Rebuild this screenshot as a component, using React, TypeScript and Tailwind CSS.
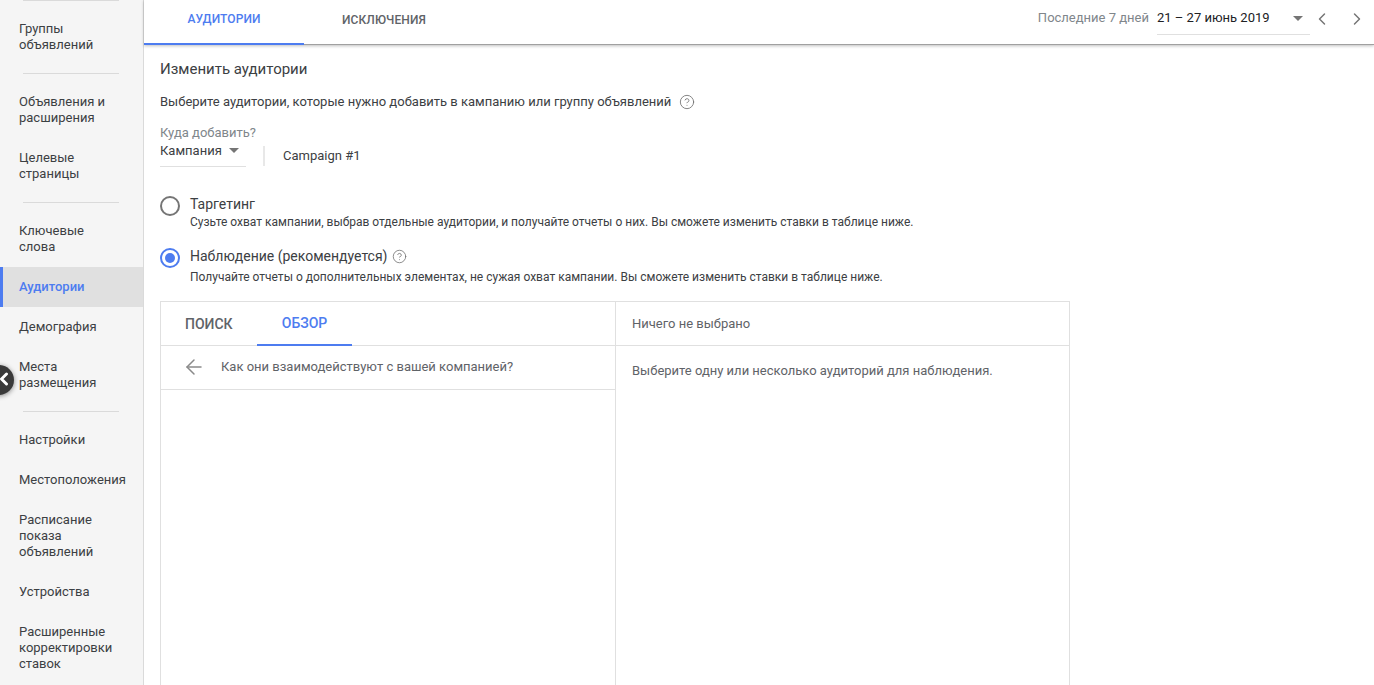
import { ArrowLeft, ChevronLeft, ChevronRight, CircleHelp } from 'lucide-react'

type NavItem = { label: string[]; active?: boolean }

const navGroups: NavItem[][] = [
  [{ label: ['Группы', 'объявлений'] }],
  [{ label: ['Объявления и', 'расширения'] }, { label: ['Целевые', 'страницы'] }],
  [
    { label: ['Ключевые', 'слова'] },
    { label: ['Аудитории'], active: true },
    { label: ['Демография'] },
    { label: ['Места', 'размещения'] },
  ],
  [
    { label: ['Настройки'] },
    { label: ['Местоположения'] },
    { label: ['Расписание', 'показа', 'объявлений'] },
    { label: ['Устройства'] },
    { label: ['Расширенные', 'корректировки', 'ставок'] },
  ],
]

function Caret() {
  return (
    <svg width="10" height="5" viewBox="0 0 10 5" className="shrink-0">
      <path d="M0 0h10L5 5z" fill="#757575" />
    </svg>
  )
}

function Sidebar() {
  return (
    <aside className="w-[144px] shrink-0 bg-[#f5f5f5] border-r border-[#dadada] text-[13px] leading-4 text-[#3c4043]">
      {navGroups.map((group, i) => (
        <div key={i}>
          <div className="mx-[23px] h-px w-[96px] bg-[#dadada]" />
          <div className="py-2">
            {group.map((item) => (
              <div
                key={item.label[0]}
                className={
                  item.active
                    ? 'border-l-[3px] border-[#4d7cf0] bg-[#e0e0e0] pl-4 py-3 font-medium text-[#4d7cf0]'
                    : 'pl-[19px] py-3'
                }
              >
                {item.label.map((line) => (
                  <div key={line}>{line}</div>
                ))}
              </div>
            ))}
          </div>
        </div>
      ))}
    </aside>
  )
}

function TopBar() {
  return (
    <header className="h-[45px] shrink-0 flex items-stretch bg-white border-b border-[#a0a0a0] shadow-[0_1px_3px_rgba(0,0,0,0.25)] relative">
      <div className="w-[160px] pb-[5px] flex items-center justify-center border-b-2 border-[#4d7cf0] text-[12px] tracking-[0.1px] font-medium text-[#4d7cf0] -mb-px">
        АУДИТОРИИ
      </div>
      <div className="w-[160px] pb-[4px] flex items-center justify-center text-[12px] tracking-[0.1px] font-medium text-[#5f6368]">
        ИСКЛЮЧЕНИЯ
      </div>
      <div className="ml-auto flex items-start pt-[10px] text-[13px] leading-4">
        <span className="text-[#80868b] mr-2">Последние 7 дней</span>
        <div className="w-[153px] h-[25px] flex justify-between border-b border-[#e0e0e0] text-[#202124]">
          <span>21 – 27 июнь 2019</span>
          <span className="mt-[6px] mr-[7px]">
            <Caret />
          </span>
        </div>
        <ChevronLeft size={20} strokeWidth={1.75} className="text-[#757575] ml-[2px] mt-[-1px]" />
        <ChevronRight size={20} strokeWidth={1.75} className="text-[#757575] ml-[15px] mr-[7px] mt-[-1px]" />
      </div>
    </header>
  )
}

function AudiencePanel() {
  return (
    <section className="mt-[16px] w-[910px] h-[500px] shrink-0 grid grid-cols-[455px_1fr] border border-[#e0e0e0] text-[13px] text-[#5f6368]">
      <div className="border-r border-[#e0e0e0]">
        <div className="h-[44px] flex border-b border-[#e0e0e0] font-medium">
          <div className="w-[96px] pt-[1px] flex items-center pl-6 text-[#5f6368] text-[14px]">ПОИСК</div>
          <div className="w-[95px] pt-[1px] -mb-px flex items-center justify-center border-b-2 border-[#4d7cf0] text-[14px] text-[#4d7cf0]">
            ОБЗОР
          </div>
        </div>
        <div className="h-[44px] pb-[1px] flex items-center border-b border-[#e0e0e0] pl-[21px]">
          <ArrowLeft size={24} strokeWidth={1.5} className="text-[#8a8a8a]" />
          <span className="ml-[15px]">Как они взаимодействуют с вашей компанией?</span>
        </div>
      </div>
      <div>
        <div className="h-[44px] pt-[1px] flex items-center border-b border-[#e0e0e0] pl-4">Ничего не выбрано</div>
        <div className="pl-4 pt-[17px] leading-4">Выберите одну или несколько аудиторий для наблюдения.</div>
      </div>
    </section>
  )
}

export default function App() {
  return (
    <div className="relative h-screen flex overflow-hidden bg-white font-['Roboto',sans-serif]">
      <Sidebar />

      {/* Collapse button over the sidebar edge */}
      <div className="absolute left-[-16px] top-[365px] size-[30px] rounded-full bg-[#3a3a3a] shadow-[0_1px_5px_rgba(0,0,0,0.45)] flex items-center justify-end">
        <ChevronLeft size={20} strokeWidth={3.5} className="text-white shrink-0 mt-[-2px]" />
      </div>

      <main className="flex-1 min-w-0 flex flex-col">
        <TopBar />
        <div className="pl-4 flex flex-col flex-1 min-h-0">
          <h1 className="mt-[14px] text-[15px] leading-5 text-[#3c4043]">Изменить аудитории</h1>
          <p className="mt-[15px] flex items-center text-[13px] leading-4 text-[#3c4043]">
            Выберите аудитории, которые нужно добавить в кампанию или группу объявлений
            <CircleHelp size={16} strokeWidth={1.25} className="ml-[8px] text-[#6e6e6e]" />
          </p>

          <div className="mt-[15px] text-[13px] leading-4 text-[#80868b]">Куда добавить?</div>
          <div className="flex items-start text-[13px] leading-4">
            <div className="w-[86px] h-[26px] pt-[2px] border-b border-[#e0e0e0] flex text-[#3c4043]">
              <span>Кампания</span>
              <span className="ml-[7px] mt-[5px]">
                <Caret />
              </span>
            </div>
            <div className="ml-[17px] mt-[5px] h-5 w-[2px] bg-[#e8e8e8]" />
            <span className="ml-[18px] mt-[7px] text-[#3c4043]">Campaign #1</span>
          </div>

          <div className="mt-[28px] flex gap-[10px]">
            <div className="mt-[1px] size-5 rounded-full border-2 border-[#757575]" />
            <div>
              <div className="text-[14px] leading-[18px] text-[#3c4043]">Таргетинг</div>
              <div className="mt-px text-[12px] leading-4 text-[#3c4043]">
                Сузьте охват кампании, выбрав отдельные аудитории, и получайте отчеты о них. Вы сможете изменить ставки в таблице ниже.
              </div>
            </div>
          </div>

          <div className="mt-[17px] flex gap-[10px]">
            <div className="mt-[1px] size-5 rounded-full border-2 border-[#4d7cf0] flex items-center justify-center">
              <div className="size-[10px] rounded-full bg-[#4d7cf0]" />
            </div>
            <div>
              <div className="flex items-center text-[14px] leading-[18px] text-[#3c4043]">
                Наблюдение (рекомендуется)
                <CircleHelp size={15} strokeWidth={1.25} className="ml-[5px] text-[#6e6e6e]" />
              </div>
              <div className="mt-[4px] text-[12px] leading-4 text-[#3c4043]">
                Получайте отчеты о дополнительных элементах, не сужая охват кампании. Вы сможете изменить ставки в таблице ниже.
              </div>
            </div>
          </div>

          <AudiencePanel />
        </div>
      </main>
    </div>
  )
}
